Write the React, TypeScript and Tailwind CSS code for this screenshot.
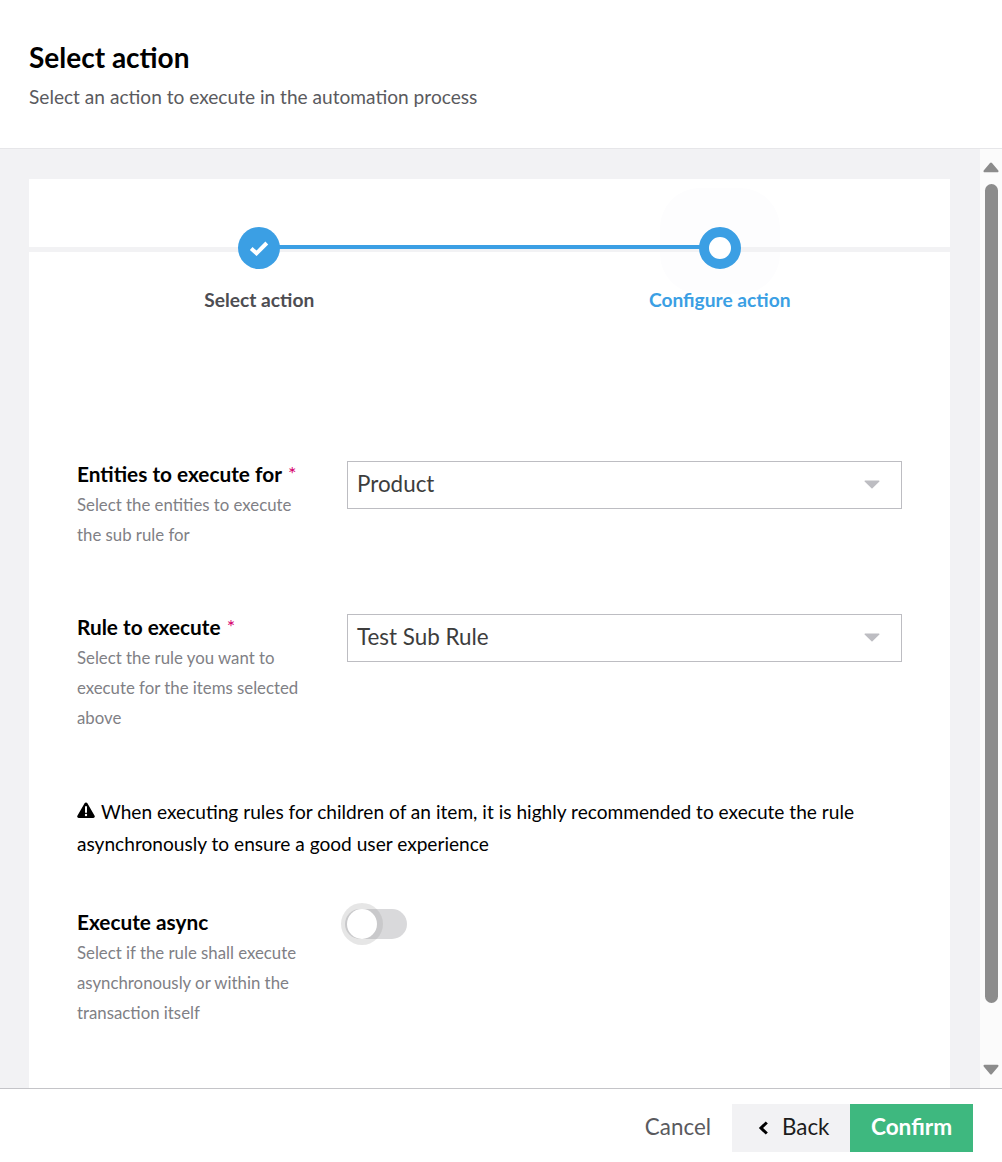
import React from 'react';

const Caret: React.FC = () => (
  <svg width="16" height="9" viewBox="0 0 16 9" className="text-[#bdbdc2]" fill="currentColor">
    <path d="M1 0.5h14a0.6 0.6 0 0 1 0.4 1L8.5 8.3a0.7 0.7 0 0 1-1 0L0.6 1.5a0.6 0.6 0 0 1 0.4-1z" />
  </svg>
);

const Select: React.FC<{ value: string }> = ({ value }) => (
  <div className="mt-[2px] flex h-12 w-[555px] items-center justify-between border border-[#bdbdc2] pb-[2px] pl-[9px] pr-[21px] text-[22.4px] text-[#3d3d3d]">
    <span>{value}</span>
    <Caret />
  </div>
);

const Field: React.FC<{ label: string; required?: boolean; lines: string[]; children: React.ReactNode }> = ({ label, required, lines, children }) => (
  <div className="flex">
    <div className="w-[270px] shrink-0">
      <div className="text-[20.8px]/7 font-bold text-black">
        {label}
        {required && <span className="ml-[6px] align-[1px] text-xl font-normal text-[#d6006d]">*</span>}
      </div>
      <div className="mt-[2px] text-[16.8px]/[30px] text-[#808085]">
        {lines.map((l) => (
          <div key={l}>{l}</div>
        ))}
      </div>
    </div>
    {children}
  </div>
);

export default function App() {
  return (
    <div className="flex h-[1162px] w-[1002px] flex-col overflow-hidden bg-white font-['Lato',sans-serif]">
      <header className="h-[149px] shrink-0 border-b border-[#e6e6e9] pl-[29px] pt-[39px]">
        <h1 className="text-[28px]/9 font-bold text-black">Select action</h1>
        <p className="mt-[7px] text-[19.13px]/[30px] text-[#5a5a5e]">Select an action to execute in the automation process</p>
      </header>

      <div className="flex min-h-0 flex-1">
        <main className="min-h-0 w-[980px] overflow-hidden bg-[#f2f2f4] pl-[29px] pr-[30px] pt-[30px]">
          <div className="h-[1000px] bg-white">
            <div className="relative grid grid-cols-2 pt-[48px]">
              <div className="absolute left-[631px] top-[9px] h-[106px] w-[120px] rounded-[40px] bg-[#fdfdfe]" />
              <div className="absolute left-0 right-0 top-[68px] h-[5px] bg-[#f2f2f4]" />
              <div className="absolute left-[230px] top-[66px] h-1 w-[461px] bg-[#3b9fe4]" />

              <div className="relative flex flex-col items-center">
                <div className="flex size-[42px] items-center justify-center rounded-full bg-[#3b9fe4]">
                  <svg width="20" height="16" viewBox="0 0 20 16" fill="none" stroke="white" strokeWidth="4">
                    <path d="M2.2 8.5 7.5 13.3 17.8 3" />
                  </svg>
                </div>
                <div className="mt-[19px] text-[19.2px]/6 font-bold text-[#4d4d52]">Select action</div>
              </div>
              <div className="relative flex flex-col items-center">
                <div className="size-[42px] rounded-full border-[10px] border-[#3b9fe4] bg-white" />
                <div className="mt-[19px] text-[19.2px]/6 font-bold text-[#3b9fe4]">Configure action</div>
              </div>
            </div>

            <div className="pl-12 pr-12 pt-[147px]">
              <Field label="Entities to execute for" required lines={['Select the entities to execute', 'the sub rule for']}>
                <Select value="Product" />
              </Field>
              <div className="mt-[62px]">
                <Field label="Rule to execute" required lines={['Select the rule you want to', 'execute for the items selected', 'above']}>
                  <Select value="Test Sub Rule" />
                </Field>
              </div>

              <p className="mt-[63px] text-[19.13px]/8 text-black">
                <svg width="18" height="16" viewBox="0 0 18 16" className="mr-[6px] inline-block align-[1px]">
                  <path d="M9 0.5a1.6 1.6 0 0 1 1.4 0.8l7.2 12.4a1.6 1.6 0 0 1-1.4 2.3H1.8a1.6 1.6 0 0 1-1.4-2.3L7.6 1.3A1.6 1.6 0 0 1 9 0.5z" fill="black" />
                  <path d="M9 5v5" stroke="white" strokeWidth="2" strokeLinecap="round" />
                  <circle cx="9" cy="13" r="1.2" fill="white" />
                </svg>
                When executing rules for children of an item, it is highly recommended to execute the rule asynchronously to ensure a good user experience
              </p>

              <div className="mt-[48px]">
                <Field label="Execute async" lines={['Select if the rule shall execute', 'asynchronously or within the', 'transaction itself']}>
                  <div className="relative -ml-[2px] mt-[1px] h-[30px] w-[62px] rounded-full bg-[#d9d9db]">
                    <div className="absolute -left-[4px] -top-[6px] size-[42px] rounded-full bg-[#9a9a9a]/25" />
                    <div className="absolute left-[2px] top-0 size-[30px] rounded-full bg-white" />
                  </div>
                </Field>
              </div>
            </div>
          </div>
        </main>

        <aside className="flex w-[22px] shrink-0 flex-col items-center bg-[#fbfbfb] pt-[13px]">
          <svg width="16" height="11" viewBox="0 0 16 11" fill="#8c8c8c">
            <path d="M7 1a1.3 1.3 0 0 1 2 0l6.3 7.6a1 1 0 0 1-.8 1.6H1.5a1 1 0 0 1-.8-1.6z" />
          </svg>
          <div className="mt-[11px] h-[819px] w-[13px] rounded-full bg-[#8c8c8c]" />
          <svg width="16" height="11" viewBox="0 0 16 11" fill="#8c8c8c" className="mt-[61px]">
            <path d="M7 10a1.3 1.3 0 0 0 2 0l6.3-7.6a1 1 0 0 0-.8-1.6H1.5a1 1 0 0 0-.8 1.6z" />
          </svg>
        </aside>
      </div>

      <footer className="flex h-[74px] shrink-0 items-start justify-end border-t border-[#c4c4c8] pr-[29px] pt-[15px]">
        <button className="mr-[21px] h-12 pb-[2px] text-[22.4px] text-[#5a5a5e]">Cancel</button>
        <button className="flex h-12 w-[118px] items-center justify-start gap-[13px] bg-[#f2f2f4] pb-[2px] pl-[25px] text-[22.4px] text-[#1c1c1c]">
          <svg width="12" height="16" viewBox="0 0 12 16" fill="none" stroke="black" strokeWidth="3" className="mt-[2px]">
            <path d="M9.8 2.5 4 8 9.8 13.5" />
          </svg>
          Back
        </button>
        <button className="h-12 w-[123px] bg-[#3eb87f] pb-[2px] text-[22.6px] font-bold text-white">Confirm</button>
      </footer>
    </div>
  );
}
